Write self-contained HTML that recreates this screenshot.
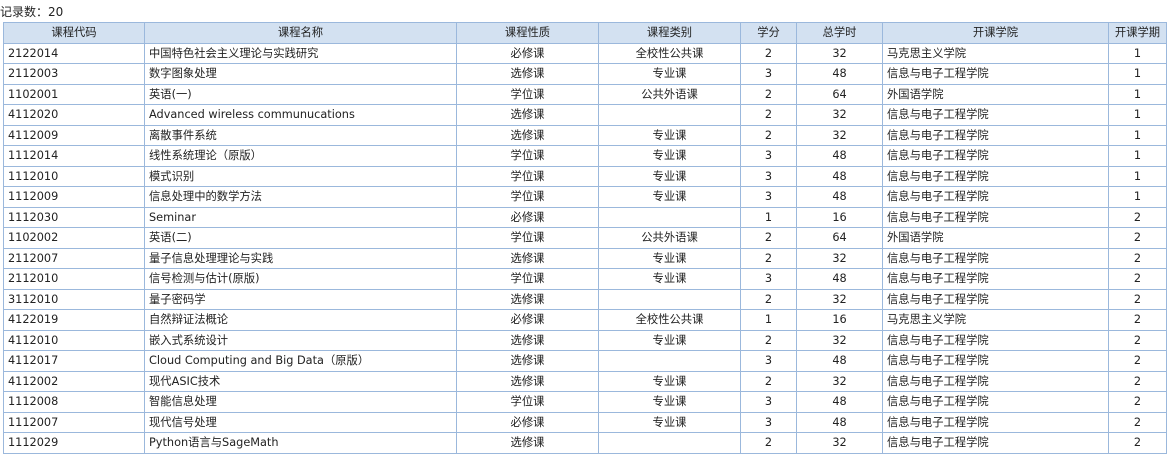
<!DOCTYPE html>
<html><head><meta charset="utf-8"><style>
body{margin:0;background:#fff;font-family:"DejaVu Sans","Noto Sans CJK SC",sans-serif;font-size:11.3px;color:#222;width:1167px;height:453px;overflow:hidden}
.cap{position:absolute;left:0;top:3px;font-size:12px}
table{position:absolute;left:3px;top:22px;border-collapse:collapse;table-layout:fixed;width:1163px}
td,th{border:1px solid #9bb8dc;height:19.5px;padding:0 0 0 4px;white-space:nowrap;overflow:hidden;font-weight:normal;line-height:19px}
th{background:#d3e1f1;text-align:center;padding:0}
.c{text-align:center;padding:0}
</style></head><body>
<div class="cap">记录数：20</div>
<table>
<colgroup><col style="width:141px"><col style="width:312px"><col style="width:142px"><col style="width:142px"><col style="width:56px"><col style="width:86px"><col style="width:226px"><col style="width:58px"></colgroup>
<tr><th>课程代码</th><th>课程名称</th><th>课程性质</th><th>课程类别</th><th>学分</th><th>总学时</th><th>开课学院</th><th>开课学期</th></tr>
<tr><td>2122014</td><td>中国特色社会主义理论与实践研究</td><td class="c">必修课</td><td class="c">全校性公共课</td><td class="c">2</td><td class="c">32</td><td>马克思主义学院</td><td class="c">1</td></tr>
<tr><td>2112003</td><td>数字图象处理</td><td class="c">选修课</td><td class="c">专业课</td><td class="c">3</td><td class="c">48</td><td>信息与电子工程学院</td><td class="c">1</td></tr>
<tr><td>1102001</td><td>英语(一)</td><td class="c">学位课</td><td class="c">公共外语课</td><td class="c">2</td><td class="c">64</td><td>外国语学院</td><td class="c">1</td></tr>
<tr><td>4112020</td><td>Advanced wireless communucations</td><td class="c">选修课</td><td class="c"></td><td class="c">2</td><td class="c">32</td><td>信息与电子工程学院</td><td class="c">1</td></tr>
<tr><td>4112009</td><td>离散事件系统</td><td class="c">选修课</td><td class="c">专业课</td><td class="c">2</td><td class="c">32</td><td>信息与电子工程学院</td><td class="c">1</td></tr>
<tr><td>1112014</td><td>线性系统理论（原版）</td><td class="c">学位课</td><td class="c">专业课</td><td class="c">3</td><td class="c">48</td><td>信息与电子工程学院</td><td class="c">1</td></tr>
<tr><td>1112010</td><td>模式识别</td><td class="c">学位课</td><td class="c">专业课</td><td class="c">3</td><td class="c">48</td><td>信息与电子工程学院</td><td class="c">1</td></tr>
<tr><td>1112009</td><td>信息处理中的数学方法</td><td class="c">学位课</td><td class="c">专业课</td><td class="c">3</td><td class="c">48</td><td>信息与电子工程学院</td><td class="c">1</td></tr>
<tr><td>1112030</td><td>Seminar</td><td class="c">必修课</td><td class="c"></td><td class="c">1</td><td class="c">16</td><td>信息与电子工程学院</td><td class="c">2</td></tr>
<tr><td>1102002</td><td>英语(二)</td><td class="c">学位课</td><td class="c">公共外语课</td><td class="c">2</td><td class="c">64</td><td>外国语学院</td><td class="c">2</td></tr>
<tr><td>2112007</td><td>量子信息处理理论与实践</td><td class="c">选修课</td><td class="c">专业课</td><td class="c">2</td><td class="c">32</td><td>信息与电子工程学院</td><td class="c">2</td></tr>
<tr><td>2112010</td><td>信号检测与估计(原版)</td><td class="c">学位课</td><td class="c">专业课</td><td class="c">3</td><td class="c">48</td><td>信息与电子工程学院</td><td class="c">2</td></tr>
<tr><td>3112010</td><td>量子密码学</td><td class="c">选修课</td><td class="c"></td><td class="c">2</td><td class="c">32</td><td>信息与电子工程学院</td><td class="c">2</td></tr>
<tr><td>4122019</td><td>自然辩证法概论</td><td class="c">必修课</td><td class="c">全校性公共课</td><td class="c">1</td><td class="c">16</td><td>马克思主义学院</td><td class="c">2</td></tr>
<tr><td>4112010</td><td>嵌入式系统设计</td><td class="c">选修课</td><td class="c">专业课</td><td class="c">2</td><td class="c">32</td><td>信息与电子工程学院</td><td class="c">2</td></tr>
<tr><td>4112017</td><td>Cloud Computing and Big Data（原版）</td><td class="c">选修课</td><td class="c"></td><td class="c">3</td><td class="c">48</td><td>信息与电子工程学院</td><td class="c">2</td></tr>
<tr><td>4112002</td><td>现代ASIC技术</td><td class="c">选修课</td><td class="c">专业课</td><td class="c">2</td><td class="c">32</td><td>信息与电子工程学院</td><td class="c">2</td></tr>
<tr><td>1112008</td><td>智能信息处理</td><td class="c">学位课</td><td class="c">专业课</td><td class="c">3</td><td class="c">48</td><td>信息与电子工程学院</td><td class="c">2</td></tr>
<tr><td>1112007</td><td>现代信号处理</td><td class="c">必修课</td><td class="c">专业课</td><td class="c">3</td><td class="c">48</td><td>信息与电子工程学院</td><td class="c">2</td></tr>
<tr><td>1112029</td><td>Python语言与SageMath</td><td class="c">选修课</td><td class="c"></td><td class="c">2</td><td class="c">32</td><td>信息与电子工程学院</td><td class="c">2</td></tr>
</table>
</body></html>
